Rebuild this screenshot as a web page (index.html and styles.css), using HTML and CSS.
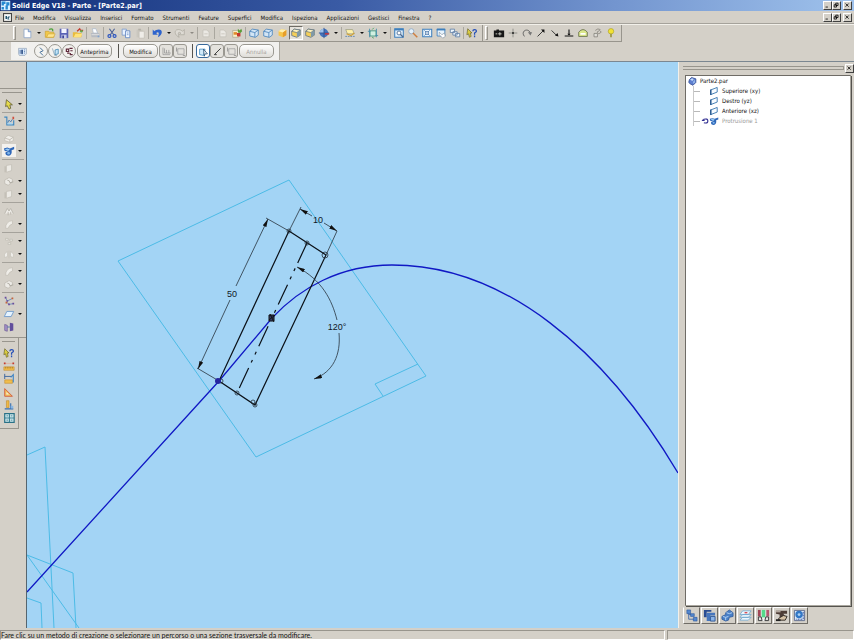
FILE: index.html
```
<!DOCTYPE html>
<html lang="it">
<head>
  <meta charset="UTF-8">
  <title>Solid Edge V18 - Parte - [Parte2.par]</title>
  <link rel="stylesheet" href="styles.css">
</head>
<body>
  <!-- shared icons, all on a 14px grid -->
  <svg class="icon-defs" aria-hidden="true">
    <symbol id="app" viewBox="0 0 14 14"><path d="M1 1h12v12H1z" fill="#d9efff"/><path d="M2 2h5v3H5v2H2zM8 3h4v4h-2v5H7V7h1zM2 9h3v3H2z" fill="#2688d0"/></symbol>
    <symbol id="doc" viewBox="0 0 14 14"><path d="M1 1h12v12H1z" fill="#f4f8fb"/><path d="M3 4h3v6H3zM7 6l4-2v3l-2 1 2 3H7z" fill="#22546f"/></symbol>
    <symbol id="new" viewBox="0 0 14 14"><path d="M3.500 2.500h5l3 3v7h-8z" fill="#fff" stroke="#8fa6c8"/><path d="M8.500 2.500v3h3" fill="#cfe0f5" stroke="#6c8bbb"/></symbol>
    <symbol id="open" viewBox="0 0 14 14"><path d="M1.500 5h4l1 1h5v6h-10z" fill="#f2c84a" stroke="#c99a2a" stroke-width=".7"/><path d="M3 12l2-4h8l-2 4z" fill="#ffe58a" stroke="#c99a2a" stroke-width=".6"/><path d="M6 3c3-2 5 0 4 2" fill="none" stroke="#4ea33c" stroke-width="1.500"/></symbol>
    <symbol id="save" viewBox="0 0 14 14"><path d="M2 2h10v11H2z" fill="#5b62b5"/><path d="M4 2h6v5H4z" fill="#f4f4ff"/><path d="M4 9h6v4H4z" fill="#c9cce8"/><path d="M5 10h2v3H5z" fill="#3c4396"/></symbol>
    <symbol id="import" viewBox="0 0 14 14"><path d="M1 6h5l1 1h4v5H1z" fill="#e9bb3e"/><path d="M2 12l2-4h8l-2 4z" fill="#ffe27a"/><path d="M6 5l3-3 1 2h3" fill="none" stroke="#c43b2d" stroke-width="1.500"/><circle cx="11" cy="5" r="1.500" fill="#68a74e"/></symbol>
    <symbol id="print" viewBox="0 0 14 14"><path d="M4 2h4l2 5H5z" fill="#fff" stroke="#9eb0c8" stroke-width=".7"/><path d="M2 7h10l1 5H3z" fill="#b7bbc2"/><path d="M3 9h9" stroke="#e8e8e8"/><circle cx="11" cy="11" r="1" fill="#7fa3cf"/></symbol>
    <symbol id="cut" viewBox="0 0 14 14"><path d="M4 2l5 7M10 2L5 9" stroke="#4b5f94" stroke-width="1.300"/><g fill="none" stroke="#2a54c0" stroke-width="1.400"><circle cx="4" cy="10.500" r="1.700"/><circle cx="10" cy="10.500" r="1.700"/></g></symbol>
    <symbol id="copy" viewBox="0 0 14 14"><path d="M2.500 2.500h5v7h-5z" fill="#e9f2ff" stroke="#7c9ccc"/><path d="M6.500 4.500h5v8h-5z" fill="#f7fbff" stroke="#6187c5"/><path d="M8 7h2M8 9h2" stroke="#6c94d2"/></symbol>
    <symbol id="paste" viewBox="0 0 14 14"><path d="M3 3h7v9H3z" fill="#cac7bf"/><path d="M6 5h6v8H6z" fill="#efede8" stroke="#bdb9b0" stroke-width=".7"/><path d="M5 2h3v2H5z" fill="#b3afa6"/></symbol>
    <symbol id="undo" viewBox="0 0 14 14"><path d="M2 3v6h6L6 7c3-2 4 0 2 5 6-3 6-9 1-9-2 0-4 1-5 2z" fill="#2e64cd"/></symbol>
    <symbol id="redo" viewBox="0 0 14 14"><path d="M12 3v6H6l2-2C5 5 4 7 6 12 0 9 0 3 5 3c2 0 4 1 5 2z" fill="#dedbd4" stroke="#a9a59b" stroke-width=".8"/></symbol>
    <symbol id="doc-off" viewBox="0 0 14 14"><path d="M3.500 3.500h4l3 2v6h-7z" fill="#ebe9e4" stroke="#c2beb5" stroke-width=".8"/><path d="M5 8h4" stroke="#c9c5bc"/></symbol>
    <symbol id="props" viewBox="0 0 14 14"><path d="M2 4h7v8H2z" fill="#f7eec9" stroke="#a59a80" stroke-width=".7"/><path d="M3 6h4v3H3z" fill="#e08a2a"/><path d="M8 2l2 2 2-2 1 3-2 2-3-1z" fill="#5a9d3a"/><path d="M7 7h4v4H7z" fill="#c7372c"/></symbol>
    <symbol id="cube-wire" viewBox="0 0 14 14"><path d="M2 5l3-2.500 7 1v6L8.500 12 2 10.500z" fill="#d3e5f5" stroke="#4d86bd"/><path d="M2 5l6 1.500L12 3.500M8 6.500V12" fill="none" stroke="#4d86bd"/></symbol>
    <symbol id="cube-solid" viewBox="0 0 14 14"><path d="M3 5l3-2.500 6 1v6L8 12l-5-2z" fill="#f7c64b"/><path d="M3 5l3-2.500 6 1L8 6.500z" fill="#fff0b0"/><path d="M8 6.500l4-3v6L8 12z" fill="#e79e2a"/></symbol>
    <symbol id="cube-edge" viewBox="0 0 14 14"><path d="M2 5l3-2.500 7 1v6L8 12 2 10z" fill="#f5cf58" stroke="#596d80" stroke-width=".9"/><path d="M2 5l3-2.500 7 1L8 6.500z" fill="#fdf3c0" stroke="#596d80" stroke-width=".8"/><path d="M8 6.500l4-3v6L8 12z" fill="#7f99a8"/></symbol>
    <symbol id="globe" viewBox="0 0 14 14"><circle cx="7" cy="7" r="5" fill="#4474bd"/><path d="M2 7a5 5 0 0 1 5-5v5z" fill="#9dc2ec"/><path d="M7 1v12M1 7h12" stroke="#2f4f8f"/><path d="M8 7h5v2H8z" fill="#b63c4b"/></symbol>
    <symbol id="sheet" viewBox="0 0 14 14"><path d="M2 3h8l2 5H4z" fill="#fff1a8" stroke="#92977f" stroke-width=".8"/><path d="M1.500 11h11" stroke="#5f86b2" stroke-dasharray="2 1"/><path d="M3 8l5 2 4-3" fill="none" stroke="#d3a12d" stroke-width="1.300"/></symbol>
    <symbol id="rotate" viewBox="0 0 14 14"><path d="M3.500 4.500h7v6h-7z" fill="#d2f0e1" stroke="#3f9480"/><path d="M3 2v10M11 2v10M1 5h3M10 10h3" stroke="#438cab"/><path d="M6 3l2-2M6 12l2 1" stroke="#44a35d"/></symbol>
    <symbol id="zoom-area" viewBox="0 0 14 14"><path d="M2 2h10v10H2z" fill="#e3f1fc" stroke="#3e7fbd" stroke-width="1.200"/><path d="M2 3h10" stroke="#3e7fbd" stroke-width="2"/><circle cx="7" cy="7" r="2.300" fill="#fff" stroke="#4a6a91"/><path d="M8.500 8.500L12 12" stroke="#4a6a91" stroke-width="1.500"/></symbol>
    <symbol id="zoom" viewBox="0 0 14 14"><circle cx="5" cy="5" r="3" fill="#e5f2fc" stroke="#8fa9c5"/><path d="M7 7l5 5" stroke="#cf7f3f" stroke-width="1.700"/></symbol>
    <symbol id="fit" viewBox="0 0 14 14"><path d="M2 2.500h10.500v9H2z" fill="#e8f4fd" stroke="#3e7fbd" stroke-width="1.200"/><path d="M4 4l6 6M10 4l-6 6" stroke="#4875a8"/><path d="M5.500 5.500h3v3h-3z" fill="#fff" stroke="#4875a8"/></symbol>
    <symbol id="pan" viewBox="0 0 14 14"><path d="M2.500 2.500h9v8h-9z" fill="#e8f4fd" stroke="#3e7fbd"/><path d="M2 3h10" stroke="#3e7fbd" stroke-width="2"/><path d="M5 6l3 3 3-2 1 4-3 2-4-4z" fill="#fff" stroke="#7b8a99" stroke-width=".7"/></symbol>
    <symbol id="views" viewBox="0 0 14 14"><path d="M1.500 2.500h5v4h-5zM4.500 5.500h5v4h-5zM7.500 7.500h5v4h-5z" fill="#edf6fd" stroke="#6482a8"/></symbol>
    <symbol id="help" viewBox="0 0 14 14"><path d="M2 2l5 5H5l1 4-2 1-1-4-2 1z" fill="#d9cc42" stroke="#5f5922" stroke-width=".7"/><path d="M8 5q0-2 2-2 2.500 0 2 2.500L10 7v2M10 10v2" fill="none" stroke="#2550b8" stroke-width="1.500"/></symbol>
    <symbol id="camera" viewBox="0 0 14 14"><path d="M1 4h3V3h3v1h6v8H1z" fill="#171717"/><path d="M3 8h2M8 6v4M6 8h4" stroke="#d8d8d0"/></symbol>
    <symbol id="point" viewBox="0 0 14 14"><path d="M7 2v10M2 7h10" stroke="#75756f" stroke-width=".8"/><path d="M6 6h2v2H6z" fill="#111"/></symbol>
    <symbol id="arc" viewBox="0 0 14 14"><path d="M4 11C-1 5 8 0 11 7" fill="none" stroke="#555"/><path d="M8 6h5l-2 4z" fill="#777"/></symbol>
    <symbol id="arrow-up" viewBox="0 0 14 14"><path d="M3 11l7-7" stroke="#222"/><path d="M7 3h4v4z" fill="#111"/></symbol>
    <symbol id="arrow-down" viewBox="0 0 14 14"><path d="M3 4l6 6" stroke="#222"/><path d="M7 10l4 1-1-4z" fill="#111"/></symbol>
    <symbol id="ground" viewBox="0 0 14 14"><path d="M7 3v6M2 10.500h10" stroke="#111" stroke-width="1.300"/><path d="M5 8h4L7 10z" fill="#111"/></symbol>
    <symbol id="arch" viewBox="0 0 14 14"><path d="M2 11V6q5-6 10 0v5z" fill="#dbe78a" stroke="#68704c"/><path d="M4 8h6" stroke="#fff" stroke-width="2"/></symbol>
    <symbol id="gears" viewBox="0 0 14 14"><path d="M3.500 7.500h4v4h-4z" fill="#e0ded8" stroke="#77746d" stroke-width=".8"/><path d="M5 4q3-3 6-1M7 6l3-2 2 2-3 2z" fill="none" stroke="#8b887f"/></symbol>
    <symbol id="bulb" viewBox="0 0 14 14"><circle cx="7" cy="5" r="3.200" fill="#f2e234" stroke="#a69c27" stroke-width=".7"/><path d="M6 8h2v4H6z" fill="#9d9743"/></symbol>

    <symbol id="rib-sheet" viewBox="0 0 14 14"><path d="M2 3h10v7l-2 2H3L2 10z" fill="#dbe9f8" stroke="#7d90a8" stroke-width=".7"/><path d="M4 5v5M6 5h1v5H6zM9 5h1M9 7h1M9 9h1" stroke="#345b98"/></symbol>
    <symbol id="rib-path" viewBox="0 0 14 14"><path d="M5 2l4 4-4 2 4 4" fill="none" stroke="#3e6995" stroke-width="1.200"/></symbol>
    <symbol id="rib-section" viewBox="0 0 14 14"><path d="M3 3l3 9h3" fill="none" stroke="#8aa5b8"/><path d="M6.500 5l4-1v6l-4 1z" fill="#c5e4f8" stroke="#3c84b0"/></symbol>
    <symbol id="rib-axis" viewBox="0 0 14 14"><path d="M3 4h3v3H3zM7 3h4M8 6h3M4 9h3M8 9v2h3" fill="none" stroke="#5e2739" stroke-width="1.500"/></symbol>
    <symbol id="rib-bars" viewBox="0 0 14 14"><path d="M2.500 2v9h9M4.500 3v6h8M7 5v4M10 5v4" fill="none" stroke="#888" stroke-width=".8"/></symbol>
    <symbol id="rib-frame" viewBox="0 0 14 14"><path d="M3.500 3.500h8v7h-8z" fill="none" stroke="#999" stroke-width=".9"/><path d="M2 2v5M10 12h3" stroke="#888"/></symbol>
    <symbol id="rib-pick" viewBox="0 0 14 14"><path d="M2 4h7l-2 8-5-1z" fill="#d2eafa" stroke="#428cc0"/><path d="M7 4l5 6H9l-1 3z" fill="#fff" stroke="#234b72"/></symbol>
    <symbol id="rib-pen" viewBox="0 0 14 14"><path d="M3 11l8-8M3 11h3" stroke="#333" stroke-width="1.200"/></symbol>

    <symbol id="select" viewBox="0 0 14 14"><path d="M4 2l7 6H8l1 4-2 1-2-4-2 1z" fill="#e5da4c" stroke="#4f4b27" stroke-width=".8"/></symbol>
    <symbol id="sketch" viewBox="0 0 14 14"><path d="M1.500 2.500h3v9h8V6" fill="none" stroke="#3c87c0" stroke-width="1.300"/><path d="M5 10l2-4 2 2 2-3" fill="none" stroke="#3874b3"/><path d="M5 9h6v2H5z" fill="#a9d5f1"/><path d="M11 2h2v3h-2z" fill="#d0503e"/></symbol>
    <symbol id="extrude-off" viewBox="0 0 14 14"><path d="M2 7l4-3 6 2v4l-4 2-6-2z" fill="#f0eee9" stroke="#bcb8af" stroke-width=".7"/><path d="M2 7l6 2 4-3M8 9v3" fill="none" stroke="#bcb8af"/></symbol>
    <symbol id="protrusion" viewBox="0 0 14 14"><path d="M1 4l4-1 3 1 5-2v3l-3 1q1 5-3 6.500-5 0-4-4l3-1L2 7z" fill="#2f67b8"/><path d="M2 5l3-1 3 1-2 2z" fill="#9bcdf5"/><circle cx="6.500" cy="9.500" r="1.500" fill="#7fb5ea"/></symbol>
    <symbol id="plate-off" viewBox="0 0 14 14"><path d="M4 4l6-1v7l-6 2z" fill="#eceae5" stroke="#c0bcb3" stroke-width=".8"/><path d="M2.500 5v7" stroke="#b9b5ac"/></symbol>
    <symbol id="round-off" viewBox="0 0 14 14"><path d="M2 6l5-3 4 2v3l-5 4-4-2z" fill="#eceae5" stroke="#bab6ad" stroke-width=".8"/><path d="M5 6q3 0 3 3l4-1" fill="none" stroke="#aaa69d"/></symbol>
    <symbol id="rib-off" viewBox="0 0 14 14"><path d="M2 10l3-6 2 3 2-3 3 6" fill="#efede8" stroke="#b7b3aa"/><path d="M6 8v4M9 8v3" stroke="#b7b3aa"/></symbol>
    <symbol id="blend-off" viewBox="0 0 14 14"><path d="M3 12q0-8 8-9v4q-4 1-5 5z" fill="#efede8" stroke="#c1bdb4" stroke-width=".8"/></symbol>
    <symbol id="pattern-off" viewBox="0 0 14 14"><path d="M3 4h3v2H3zM8 5h3v2H8zM6 9h3v2H6z" fill="#f0eee9" stroke="#b7b3aa" stroke-width=".7"/></symbol>
    <symbol id="mirror-off" viewBox="0 0 14 14"><path d="M5 4L2 7v4l3-1zM9 4l3 3v4l-3-1z" fill="#f5f4f1" stroke="#c1bdb4" stroke-width=".7"/><path d="M7 3v9" stroke="#c9c5bc"/></symbol>
    <symbol id="curve" viewBox="0 0 14 14"><path d="M3 3l2 4 6-3M4 8l3 3 5-1" fill="none" stroke="#6686b6"/><g fill="#6a4c9d"><path d="M2 2h2v2H2zM4 6h2v2H4zM6 10h2v2H6zM11 9h2v2h-2z"/></g><path d="M10 3h2v2h-2zM3 8h2v2H3z" fill="#c8643b"/></symbol>
    <symbol id="plane" viewBox="0 0 14 14"><path d="M1.500 10l3-6h8l-3 6z" fill="#e5f3ff" stroke="#6a98ca"/></symbol>
    <symbol id="planes" viewBox="0 0 14 14"><path d="M2 4l3 1v7l-3-1z" fill="#a692ca" stroke="#62518c" stroke-width=".7"/><path d="M8 2l4 1v8l-4 1z" fill="#614e9c"/><path d="M5 7h3" stroke="#426da8"/></symbol>
    <symbol id="ruler" viewBox="0 0 14 14"><path d="M1 8h12v4H1z" fill="#f0bd4c" stroke="#c08525" stroke-width=".6"/><path d="M3 8v2M5 8v2M7 8v2M9 8v2M11 8v2" stroke="#8f6417" stroke-width=".6"/><path d="M2 4h10" stroke="#e0a48f" stroke-width=".7"/><path d="M1 3h2v2H1zM11 3h2v2h-2z" fill="#c43b2d"/></symbol>
    <symbol id="ruler-pts" viewBox="0 0 14 14"><path d="M2 8h9v4H2z" fill="#f0bd4c" stroke="#c08525" stroke-width=".6"/><path d="M2 1v6M2 4h8" stroke="#2f5c9c"/><path d="M9 5l3-3v9" fill="none" stroke="#3f85c5" stroke-width="1.300"/></symbol>
    <symbol id="angle" viewBox="0 0 14 14"><path d="M2 12V3l9 9z" fill="#f2c05c" stroke="#d0573b"/><path d="M4 10V7l3 3z" fill="#f2eee2"/></symbol>
    <symbol id="area" viewBox="0 0 14 14"><path d="M4 2h3v8H4z" fill="#eeb947" stroke="#bb7f22" stroke-width=".6"/><path d="M2 11.500h10M9 5v6" stroke="#3770b2" stroke-width="1.300"/><path d="M9 8h3v3H9z" fill="#8bb7e3"/></symbol>
    <symbol id="table" viewBox="0 0 14 14"><path d="M2 2h11v10H2z" fill="#d3ebee" stroke="#2a7187" stroke-width="1.400"/><path d="M2 7h11M7.500 2v10" stroke="#3c8296" stroke-width="1.300"/><path d="M4 4.500h2M9 4.500h2M4 9.500h2M9 9.500h2" stroke="#3c8296"/></symbol>

    <symbol id="part" viewBox="0 0 14 14"><path d="M2 5l3-3 3 1 3 1v5l-4 4-4-2-2-2z" fill="#5d7fd0" stroke="#263e86"/><path d="M3 5l3-2 2 2-2 2z" fill="#c6dcfa"/><path d="M7 8l3-3v4l-3 2z" fill="#93b5ea"/></symbol>
    <symbol id="ref-plane" viewBox="0 0 14 14"><path d="M2.500 5.500L11.500 2v6.500L2.500 12z" fill="#f6fbff" stroke="#2f6fab" stroke-width="1.200"/><path d="M2.500 5v7.500" stroke="#1a4c85" stroke-width="1.600"/></symbol>
    <symbol id="rollback" viewBox="0 0 14 14"><path d="M5 4q7-2 7 3t-7 3" fill="none" stroke="#2e2b90" stroke-width="2"/><path d="M1 7h6L4 3z" fill="#2e2b90"/></symbol>
    <symbol id="tab-tree" viewBox="0 0 14 14"><path d="M4 3v8h7M4 6h4" fill="none" stroke="#456cab"/><path d="M2 1h4v4H2zM6 5h4v3H6zM9 9h4v4H9z" fill="#5387cf" stroke="#28549b" stroke-width=".6"/></symbol>
    <symbol id="tab-lib" viewBox="0 0 14 14"><path d="M1 1h8v2H4v6H1z" fill="#2a4d92"/><path d="M4 4h9v3H8v6H4z" fill="#4676bd"/><path d="M8 8h5v5H8z" fill="#8cb4e8" stroke="#2d5797"/></symbol>
    <symbol id="tab-family" viewBox="0 0 14 14"><path d="M1 8l4-2V4l4-3 4 3v4l-4 1-1 3-3 1-4-2z" fill="#4a80c6" stroke="#2b5799" stroke-width=".8"/><path d="M2 8l3 1 3-1M6 4l3 1 3-1M5 9v3" fill="none" stroke="#b5d4f5"/></symbol>
    <symbol id="tab-layers" viewBox="0 0 14 14"><path d="M1 12l3-3h9l-3 3zM1 9l3-3h9l-3 3zM1 6l3-4h9l-3 4z" fill="#eef7fd" stroke="#68a4cf" stroke-width=".8"/><path d="M6 4h3" stroke="#d4434c" stroke-width="1.400"/></symbol>
    <symbol id="tab-sensor" viewBox="0 0 14 14"><path d="M1 1h12v12H1z" fill="#f1f1f1"/><path d="M1 1h3v7H1z" fill="#a14757"/><path d="M5 1h4v8H5z" fill="#55d98a"/><path d="M10 1h3v7h-3z" fill="#b45871"/><path d="M1.500 8.500h3l1 4h-4zM9.500 8.500h3v4h-4z" fill="#e4e4e4" stroke="#333"/></symbol>
    <symbol id="tab-play" viewBox="0 0 14 14"><path d="M1 2h12v3H9l2 3-2 2-4-1V6L1 5z" fill="#4d3c35"/><path d="M1 3h5" stroke="#e3d9cd"/><path d="M4 10l5-3 4 1-2 4H4z" fill="#d5c1a4" stroke="#2e2722"/><path d="M1 12h5" stroke="#222" stroke-width="2"/></symbol>
    <symbol id="tab-sim" viewBox="0 0 14 14"><path d="M1.500 1.500h11v11h-11z" fill="#e0edfa" stroke="#5f6b8c"/><circle cx="6.500" cy="6" r="4" fill="#3277c6"/><circle cx="6.500" cy="6" r="1.500" fill="#aad2f5"/><path d="M11 3v8H3" fill="none" stroke="#2e4b9c" stroke-dasharray="2 1"/></symbol>
  </svg>

  <header class="titlebar">
    <svg class="icon"><use href="#app"/></svg>
    <h1 class="title">Solid Edge V18 - Parte - [Parte2.par]</h1>
    <div class="window-buttons">
      <button aria-label="Riduci"><svg viewBox="0 0 9 9"><path d="M2 6.500h3" stroke="#000"/></svg></button>
      <button aria-label="Ripristina"><svg viewBox="0 0 9 9"><path d="M3.500 1.500h3v3h-3zM1.500 3.500h3v3h-3z" fill="#d4d0c8" stroke="#000"/></svg></button>
      <button aria-label="Chiudi" class="close"><svg viewBox="0 0 9 9"><path d="M2 2l4 4M6 2L2 6" stroke="#000"/></svg></button>
    </div>
  </header>

  <nav class="menubar">
    <svg class="icon doc-icon"><use href="#doc"/></svg>
    <button>File</button>
    <button>Modifica</button>
    <button>Visualizza</button>
    <button>Inserisci</button>
    <button>Formato</button>
    <button>Strumenti</button>
    <button>Feature</button>
    <button>Superfici</button>
    <button>Modifica</button>
    <button>Ispeziona</button>
    <button>Applicazioni</button>
    <button>Gestisci</button>
    <button>Finestra</button>
    <button>?</button>
    <div class="window-buttons">
      <button aria-label="Riduci documento"><svg viewBox="0 0 9 9"><path d="M2 6.500h3" stroke="#000"/></svg></button>
      <button aria-label="Ripristina documento"><svg viewBox="0 0 9 9"><path d="M3.500 1.500h3v3h-3zM1.500 3.500h3v3h-3z" fill="#d4d0c8" stroke="#000"/></svg></button>
      <button aria-label="Chiudi documento" class="close"><svg viewBox="0 0 9 9"><path d="M2 2l4 4M6 2L2 6" stroke="#000"/></svg></button>
    </div>
  </nav>

  <div class="toolbar-row">
    <div class="toolbar">
      <span class="grip"></span>
      <button class="tool" aria-label="Nuovo"><svg class="icon"><use href="#new"/></svg></button>
      <button class="drop" aria-label="Altri modelli"></button>
      <button class="tool" aria-label="Apri"><svg class="icon"><use href="#open"/></svg></button>
      <button class="tool" aria-label="Salva"><svg class="icon"><use href="#save"/></svg></button>
      <button class="tool" aria-label="Importa"><svg class="icon"><use href="#import"/></svg></button>
      <span class="sep"></span>
      <button class="tool" aria-label="Stampa"><svg class="icon"><use href="#print"/></svg></button>
      <span class="sep"></span>
      <button class="tool" aria-label="Taglia"><svg class="icon"><use href="#cut"/></svg></button>
      <button class="tool" aria-label="Copia"><svg class="icon"><use href="#copy"/></svg></button>
      <button class="tool" aria-label="Incolla" disabled><svg class="icon"><use href="#paste"/></svg></button>
      <span class="sep"></span>
      <button class="tool" aria-label="Annulla"><svg class="icon"><use href="#undo"/></svg></button>
      <button class="drop" aria-label="Elenco annulla"></button>
      <button class="tool" aria-label="Ripeti" disabled><svg class="icon"><use href="#redo"/></svg></button>
      <button class="drop" aria-label="Elenco ripeti" disabled></button>
      <span class="sep"></span>
      <button class="tool" aria-label="Aggiorna" disabled><svg class="icon"><use href="#doc-off"/></svg></button>
      <span class="sep"></span>
      <button class="tool" aria-label="Collegamenti" disabled><svg class="icon"><use href="#doc-off"/></svg></button>
      <button class="tool" aria-label="Proprietà"><svg class="icon"><use href="#props"/></svg></button>
      <span class="sep"></span>
      <button class="tool" aria-label="Wireframe"><svg class="icon"><use href="#cube-wire"/></svg></button>
      <button class="tool" aria-label="Bordi nascosti"><svg class="icon"><use href="#cube-wire"/></svg></button>
      <button class="tool" aria-label="Ombreggiato"><svg class="icon"><use href="#cube-solid"/></svg></button>
      <button class="tool pressed" aria-label="Ombreggiato con bordi"><svg class="icon"><use href="#cube-edge"/></svg></button>
      <button class="tool" aria-label="Nitidezza"><svg class="icon"><use href="#cube-edge"/></svg></button>
      <button class="tool" aria-label="Orientamento"><svg class="icon"><use href="#globe"/></svg></button>
      <button class="drop" aria-label="Elenco orientamenti"></button>
      <span class="sep"></span>
      <button class="tool" aria-label="Vista schizzo"><svg class="icon"><use href="#sheet"/></svg></button>
      <button class="drop" aria-label="Elenco viste"></button>
      <button class="tool" aria-label="Ruota"><svg class="icon"><use href="#rotate"/></svg></button>
      <button class="drop" aria-label="Opzioni di rotazione"></button>
      <span class="sep"></span>
      <button class="tool" aria-label="Zoom area"><svg class="icon"><use href="#zoom-area"/></svg></button>
      <button class="tool" aria-label="Zoom"><svg class="icon"><use href="#zoom"/></svg></button>
      <button class="tool" aria-label="Adatta"><svg class="icon"><use href="#fit"/></svg></button>
      <button class="tool" aria-label="Panoramica"><svg class="icon"><use href="#pan"/></svg></button>
      <button class="tool" aria-label="Finestre"><svg class="icon"><use href="#views"/></svg></button>
      <span class="sep"></span>
      <button class="tool" aria-label="Guida rapida"><svg class="icon"><use href="#help"/></svg></button>
    </div>
    <div class="toolbar">
      <span class="grip"></span>
      <button class="tool" aria-label="Cattura"><svg class="icon"><use href="#camera"/></svg></button>
      <button class="tool" aria-label="Punto"><svg class="icon"><use href="#point"/></svg></button>
      <button class="tool" aria-label="Arco"><svg class="icon"><use href="#arc"/></svg></button>
      <button class="tool" aria-label="Freccia su"><svg class="icon"><use href="#arrow-up"/></svg></button>
      <button class="tool" aria-label="Freccia giù"><svg class="icon"><use href="#arrow-down"/></svg></button>
      <button class="tool" aria-label="Vincola"><svg class="icon"><use href="#ground"/></svg></button>
      <button class="tool" aria-label="Sezione"><svg class="icon"><use href="#arch"/></svg></button>
      <button class="tool" aria-label="Ingranaggi"><svg class="icon"><use href="#gears"/></svg></button>
      <button class="tool" aria-label="Suggerimenti"><svg class="icon"><use href="#bulb"/></svg></button>
    </div>
  </div>

  <div class="ribbon-row">
    <div class="ribbon">
      <button class="step plain" aria-label="Opzioni"><svg class="icon"><use href="#rib-sheet"/></svg></button>
      <div class="ribbon-group">
        <button class="step round" aria-label="Percorso"><svg class="icon"><use href="#rib-path"/></svg></button>
        <button class="step round" aria-label="Sezione trasversale"><svg class="icon"><use href="#rib-section"/></svg></button>
        <button class="step round" aria-label="Asse"><svg class="icon"><use href="#rib-axis"/></svg></button>
        <button class="step text">Anteprima</button>
      </div>
      <div class="ribbon-group">
        <button class="step text">Modifica</button>
        <button class="step square" aria-label="Definisci inizio"><svg class="icon"><use href="#rib-bars"/></svg></button>
        <button class="step square" aria-label="Mappa vertici"><svg class="icon"><use href="#rib-frame"/></svg></button>
      </div>
      <div class="ribbon-group">
        <button class="step on" aria-label="Seleziona"><svg class="icon"><use href="#rib-pick"/></svg></button>
        <button class="step square" aria-label="Disegna"><svg class="icon"><use href="#rib-pen"/></svg></button>
        <button class="step square" aria-label="Profilo"><svg class="icon"><use href="#rib-frame"/></svg></button>
        <button class="step text" disabled>Annulla</button>
      </div>
    </div>
  </div>

  <main class="workspace">
    <aside class="side-tools">
      <div class="feature-tools">
        <div class="tool-group">
          <button class="tool" aria-label="Strumento selezione"><svg class="icon"><use href="#select"/></svg></button><button class="drop" aria-label="Filtri selezione"></button>
        </div>
        <div class="tool-group">
          <button class="tool" aria-label="Schizzo"><svg class="icon"><use href="#sketch"/></svg></button><button class="drop" aria-label="Tipi di schizzo"></button>
        </div>
        <div class="tool-group">
          <button class="tool" aria-label="Estrusione" disabled><svg class="icon"><use href="#extrude-off"/></svg></button>
          <button class="tool lit" aria-label="Protrusione"><svg class="icon"><use href="#protrusion"/></svg></button><button class="drop" aria-label="Tipi di protrusione"></button>
        </div>
        <div class="tool-group">
          <button class="tool" aria-label="Scavo" disabled><svg class="icon"><use href="#plate-off"/></svg></button>
          <button class="tool" aria-label="Foro" disabled><svg class="icon"><use href="#round-off"/></svg></button><button class="drop" aria-label="Tipi di foro"></button>
          <button class="tool" aria-label="Scavo rotazione" disabled><svg class="icon"><use href="#plate-off"/></svg></button><button class="drop" aria-label="Tipi di scavo"></button>
        </div>
        <div class="tool-group">
          <button class="tool" aria-label="Sformo" disabled><svg class="icon"><use href="#rib-off"/></svg></button>
          <button class="tool" aria-label="Raccordo" disabled><svg class="icon"><use href="#blend-off"/></svg></button><button class="drop" aria-label="Tipi di raccordo"></button>
        </div>
        <div class="tool-group">
          <button class="tool" aria-label="Serie" disabled><svg class="icon"><use href="#pattern-off"/></svg></button><button class="drop" aria-label="Tipi di serie"></button>
          <button class="tool" aria-label="Specchio" disabled><svg class="icon"><use href="#mirror-off"/></svg></button><button class="drop" aria-label="Tipi di specchio"></button>
        </div>
        <div class="tool-group">
          <button class="tool" aria-label="Nervatura" disabled><svg class="icon"><use href="#blend-off"/></svg></button><button class="drop" aria-label="Tipi di nervatura"></button>
          <button class="tool" aria-label="Spessore" disabled><svg class="icon"><use href="#round-off"/></svg></button><button class="drop" aria-label="Tipi di spessore"></button>
        </div>
        <div class="tool-group">
          <button class="tool" aria-label="Curva"><svg class="icon"><use href="#curve"/></svg></button>
          <button class="tool" aria-label="Piano"><svg class="icon"><use href="#plane"/></svg></button><button class="drop" aria-label="Tipi di piano"></button>
          <button class="tool" aria-label="Sistema di coordinate"><svg class="icon"><use href="#planes"/></svg></button>
        </div>
      </div>
      <div class="measure-tools">
        <button class="tool" aria-label="Consultazione"><svg class="icon"><use href="#help"/></svg></button>
        <button class="tool" aria-label="Misura distanza"><svg class="icon"><use href="#ruler"/></svg></button>
        <button class="tool" aria-label="Misura minima"><svg class="icon"><use href="#ruler-pts"/></svg></button>
        <button class="tool" aria-label="Misura angolo"><svg class="icon"><use href="#angle"/></svg></button>
        <button class="tool" aria-label="Misura area"><svg class="icon"><use href="#area"/></svg></button>
        <button class="tool" aria-label="Variabili"><svg class="icon"><use href="#table"/></svg></button>
      </div>
    </aside>

    <section class="viewport">
      <svg class="drawing" viewBox="27 62 651 566" preserveAspectRatio="xMinYMin slice" role="img" aria-label="Profilo e percorso">
        <defs>
          <marker id="head" viewBox="0 0 8 4" refX="8" refY="2" markerWidth="8" markerHeight="4" markerUnits="userSpaceOnUse" orient="auto-start-reverse"><path d="M8 2L0 0v4z" fill="#111"/></marker>
        </defs>
        <!-- reference planes -->
        <g class="ref-lines">
          <path d="M289 180L118 261L256 457L426 376Z"/>
          <path d="M418 364L375 384L383 396"/>
          <path d="M27 455L45 447L54 628"/>
          <path d="M27 555L73 573L76 628M27 555L79 628"/>
          <path d="M27 598L41 603L42 628"/>
        </g>
        <!-- sweep path -->
        <path class="sweep" d="M27 592L219 381L272 318C300 288 340 265 392 265C505 265 605 350 678 473"/>
        <!-- cross section -->
        <path class="profile" d="M289 231L326 255L255 405L219 381Z"/>
        <path class="axis" d="M307 243L237 393"/>
        <!-- dimensions -->
        <g class="dims">
          <path d="M289 231L266 218M219 381L197 368M289 231L301 207M326 255L337 231"/>
          <path d="M236 286L268 219" marker-end="url(#head)"/>
          <path d="M230 300L198 369" marker-end="url(#head)"/>
          <path d="M312 216L300 209" marker-end="url(#head)"/>
          <path d="M324 223L337 231" marker-end="url(#head)"/>
          <path d="M337 320C332 300 322 280 297 267" marker-end="url(#head)"/>
          <path d="M339 333C341 355 333 372 314 379" marker-end="url(#head)"/>
        </g>
        <g class="points">
          <circle cx="289" cy="231" r="2"/><circle cx="307" cy="243" r="2"/><circle cx="325" cy="255" r="3"/>
          <circle cx="237" cy="393" r="2"/><circle cx="255" cy="405" r="2"/><circle cx="253" cy="402" r="2"/><circle cx="221" cy="381" r="2"/>
        </g>
        <circle cx="218" cy="381" r="3" fill="#2525a0"/>
        <path d="M269 315h5v6h-5zM270 314l4 8M275 315l-6 5" fill="#333b68" stroke="#111"/>
        <g class="labels">
          <text x="232" y="297">50</text>
          <text x="318" y="223">10</text>
          <text x="337" y="330">120°</text>
        </g>
      </svg>
    </section>

    <aside class="pathfinder">
      <div class="pane-head">
        <span class="pane-grip"></span>
        <button class="pane-close" aria-label="Chiudi pannello"><svg viewBox="0 0 9 9"><path d="M2 2l4 4M6 2L2 6" stroke="#000"/></svg></button>
      </div>
      <div class="tree">
        <div class="tree-root"><svg class="icon"><use href="#part"/></svg>Parte2.par</div>
        <ul>
          <li><svg class="icon"><use href="#ref-plane"/></svg>Superiore (xy)</li>
          <li><svg class="icon"><use href="#ref-plane"/></svg>Destro (yz)</li>
          <li><svg class="icon"><use href="#ref-plane"/></svg>Anteriore (xz)</li>
          <li class="inactive"><svg class="icon rollback"><use href="#rollback"/></svg><svg class="icon"><use href="#protrusion"/></svg>Protrusione 1</li>
        </ul>
      </div>
      <div class="tabs">
        <button class="tab active" aria-label="Albero delle feature"><svg class="icon"><use href="#tab-tree"/></svg></button>
        <button class="tab" aria-label="Libreria"><svg class="icon"><use href="#tab-lib"/></svg></button>
        <button class="tab" aria-label="Famiglia di parti"><svg class="icon"><use href="#tab-family"/></svg></button>
        <button class="tab" aria-label="Livelli"><svg class="icon"><use href="#tab-layers"/></svg></button>
        <button class="tab" aria-label="Sensori"><svg class="icon"><use href="#tab-sensor"/></svg></button>
        <button class="tab" aria-label="Riproduzione"><svg class="icon"><use href="#tab-play"/></svg></button>
        <button class="tab" aria-label="Simulazione"><svg class="icon"><use href="#tab-sim"/></svg></button>
      </div>
    </aside>
  </main>

  <footer class="statusbar">
    <div class="status-text">Fare clic su un metodo di creazione o selezionare un percorso o una sezione trasversale da modificare.</div>
    <div class="status-extra"></div>
  </footer>
</body>
</html>
```
FILE: styles.css
```
* {
  box-sizing: border-box;
}

body {
  margin: 0;
  height: 100vh;
  display: flex;
  flex-direction: column;
  overflow: hidden;
  background-color: #d4d0c8;
  font-family: "DejaVu Sans Condensed", "DejaVu Sans", Tahoma, sans-serif;
  font-size: 6px;
  color: #111;
}

button {
  margin: 0;
  padding: 0;
  border: none;
  background: none;
  font: inherit;
  color: inherit;
}

svg {
  display: block;
}

.icon-defs {
  display: none;
}

.icon {
  width: 12px;
  height: 12px;
  flex: none;
}

/* title and menu */
.titlebar {
  height: 11px;
  flex: none;
  display: flex;
  align-items: center;
  gap: 1px;
  background: linear-gradient(to right, #12307a, #3a5ba5 40%, #7395cf 72%, #9fc2ec);
}

.titlebar .icon {
  width: 11px;
  height: 11px;
}

.title {
  margin: 0;
  font-size: 7px;
  font-weight: bold;
  color: #fff;
}

.window-buttons {
  display: flex;
  margin-left: auto;
  padding-right: 2px;
}

.window-buttons button,
.pane-close {
  width: 9px;
  height: 9px;
  background-color: #d4d0c8;
  border: 1px solid;
  border-color: #fff #404040 #404040 #fff;
}

.window-buttons .close {
  margin-left: 2px;
}

.menubar {
  height: 13px;
  flex: none;
  display: flex;
  align-items: center;
  gap: 9px;
  padding-left: 3px;
  border-bottom: 1px solid #a5a29b;
}

.menubar .doc-icon {
  width: 9px;
  height: 9px;
  margin-right: -6px;
  border: 1px solid #444;
}

/* toolbars */
.toolbar-row {
  height: 18px;
  flex: none;
  display: flex;
  border-top: 1px solid #f2f0ea;
}

.toolbar {
  display: flex;
  align-items: center;
  padding-right: 3px;
  border-right: 1px solid #98958d;
  border-bottom: 1px solid #98958d;
}

.toolbar:first-child {
  padding-left: 13px;
}

.grip {
  width: 3px;
  height: 14px;
  margin-right: 4px;
  border: 1px solid;
  border-color: #fff #98958d #98958d #fff;
}

.toolbar + .toolbar .grip {
  margin-left: 2px;
}

.tool {
  width: 14px;
  height: 14px;
  flex: none;
  display: grid;
  place-items: center;
}

.tool.pressed {
  border: 1px solid;
  border-color: #6f6c66 #fff #fff #6f6c66;
  background-color: #e6e3dc;
}

.tool.lit {
  background-color: #f4f2ee;
}

.drop {
  width: 9px;
  height: 10px;
  display: grid;
  place-items: center;
}

.drop::before {
  content: "";
  border: 2px solid transparent;
  border-top-color: #111;
  border-bottom: none;
}

.toolbar .drop:disabled::before {
  border-top-color: #8d8a83;
}

.sep {
  width: 1px;
  height: 12px;
  margin: 0 1px;
  background-color: #aaa79f;
}

/* ribbon */
.ribbon-row {
  height: 19px;
  flex: none;
  padding-left: 11px;
}

.ribbon {
  display: inline-flex;
  align-items: center;
  height: 18px;
  padding: 0 4px;
  background-color: #f1f0ee;
  border-right: 1px solid #aaa79f;
}

.ribbon-group {
  display: flex;
  align-items: center;
  margin-left: 5px;
}

.ribbon-group + .ribbon-group {
  padding-left: 3px;
  border-left: 1px solid #55534e;
}

.step {
  width: 14px;
  height: 14px;
  display: grid;
  place-items: center;
  border: 1px solid #9a9891;
  border-radius: 3px;
  background-color: #f3f2ef;
}

.step .icon {
  width: 11px;
  height: 11px;
}

.step.plain {
  border-color: transparent;
}

.step.round {
  border-radius: 7px;
}

.step.square {
  background-color: #e4e2dd;
}

.step.on {
  border-color: #39699a;
  background-color: #fff;
}

.step.text {
  width: 35px;
  margin: 0 1px;
  border-radius: 5px;
  background: linear-gradient(#fff, #dfddd8);
  white-space: nowrap;
}

.step.text:disabled {
  color: #a5a29b;
}

/* workspace */
.workspace {
  flex: 1;
  min-height: 0;
  display: flex;
  border-top: 1px solid #7b8791;
}

.side-tools {
  width: 27px;
  flex: none;
  padding-top: 26px;
  border-right: 1px solid #55656f;
}

.feature-tools,
.measure-tools {
  padding: 8px 2px 4px;
  border-bottom: 1px solid #98958d;
  background: linear-gradient(#98958d, #98958d) 2px 3px / 20px 1px no-repeat;
}

.feature-tools {
  border-top: 1px solid #98958d;
}

.measure-tools {
  width: 19px;
  background-size: 13px 1px;
  border-right: 1px solid #98958d;
}

.side-tools .tool {
  height: 13px;
}

.tool-group {
  display: grid;
  grid-template-columns: 14px 8px;
  align-items: center;
}

.tool-group .tool {
  grid-column: 1;
}

.tool-group .drop {
  width: 8px;
}

.tool-group + .tool-group {
  margin-top: 2px;
  padding-top: 1px;
  border-top: 1px solid #a5a29b;
}

.viewport {
  flex: 1;
  min-width: 0;
  background-color: #a3d4f5;
}

.drawing {
  width: 100%;
  height: 100%;
}

.ref-lines {
  fill: none;
  stroke: #4cbbe6;
}

.sweep {
  fill: none;
  stroke: #1018c4;
  stroke-width: 1.3;
}

.profile {
  fill: none;
  stroke: #0b1118;
  stroke-width: 1.2;
}

.axis {
  stroke: #0b1118;
  stroke-width: 1.2;
  stroke-dasharray: 22 6 3 6 3 6;
}

.dims {
  fill: none;
  stroke: #28343e;
  stroke-width: 0.8;
}

.points {
  fill: none;
  stroke: #26323c;
  stroke-width: 0.8;
}

.labels {
  font-family: "Liberation Sans", Arial, sans-serif;
  font-size: 9px;
  text-anchor: middle;
  fill: #10181f;
}

/* feature tree pane */
.pathfinder {
  width: 176px;
  flex: none;
  display: flex;
  flex-direction: column;
  padding-left: 4px;
  border-left: 1px solid #f2f0ea;
}

.pane-head {
  height: 12px;
  flex: none;
  display: flex;
  align-items: center;
  gap: 1px;
}

.pane-grip {
  flex: 1;
  height: 4px;
  border: 1px solid #98958d;
  border-left: none;
}

.tree {
  flex: 1;
  min-height: 0;
  margin: 1px 3px 0 2px;
  padding: 0 2px;
  background-color: #fff;
  border: 1px solid;
  border-color: #6f6c66 #aaa79f #aaa79f #6f6c66;
  box-shadow: 1px 1px #55534e;
  line-height: 10px;
}

.tree .icon {
  width: 10px;
  height: 10px;
}

.tree-root {
  display: flex;
  gap: 2px;
}

.tree ul {
  list-style: none;
  margin: 0 0 0 5px;
  padding: 0;
}

.tree li {
  display: flex;
  gap: 3px;
  padding-left: 15px;
  background: linear-gradient(#b9b9b9, #b9b9b9) 0 5px / 6px 1px no-repeat;
  border-left: 1px solid #c9c9c9;
}

.tree li.inactive {
  color: #9a9a9a;
  padding-left: 7px;
  gap: 0;
}

.tree li.inactive .icon + .icon {
  margin-right: 3px;
}

.tree .rollback {
  width: 8px;
}

.tabs {
  height: 22px;
  flex: none;
  display: flex;
  gap: 1px;
  padding: 1px 0 0;
}

.tab {
  width: 17px;
  height: 17px;
  display: grid;
  place-items: center;
  border: 1px solid;
  border-color: #fff #6f6c66 #6f6c66 #fff;
}

.tab .icon {
  width: 13px;
  height: 13px;
}

.tab.active {
  border-top-color: transparent;
}

/* status bar */
.statusbar {
  height: 12px;
  flex: none;
  display: flex;
  gap: 2px;
  padding-top: 2px;
}

.status-text,
.status-extra {
  border: 1px solid;
  border-color: #98958d #fff #fff #98958d;
  line-height: 8px;
  white-space: nowrap;
}

.status-text {
  flex: 1;
  font-family: Lato, Tahoma, sans-serif;
  font-size: 7px;
}

.status-extra {
  width: 187px;
}
```
